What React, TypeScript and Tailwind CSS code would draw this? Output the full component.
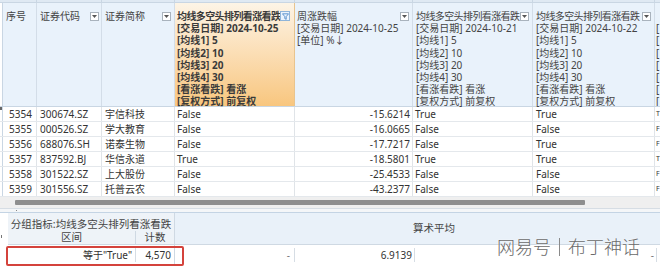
import React from "react";

const FONT = { fontFamily: '"Noto Sans", "Noto Sans CJK SC", sans-serif' };

function FilterBtn() {
  return (
    <span className="flex h-[9px] w-[9px] shrink-0 items-center justify-center border border-[#a9b3bd] bg-white">
      <svg width="5" height="3" viewBox="0 0 5 3"><path d="M0 0 L5 0 L2.5 3 Z" fill="#555" /></svg>
    </span>
  );
}

function FunnelBtn() {
  return (
    <span className="flex h-[10px] w-[10px] shrink-0 items-center justify-center border border-[#8fb4d9] bg-[#eaf3fd]">
      <svg width="7" height="7" viewBox="0 0 7 7"><path d="M0.5 0.8 H6.5 L4.2 3.6 V6.3 L2.8 5.6 V3.6 Z" fill="none" stroke="#3f7fc4" strokeWidth="0.8" /></svg>
    </span>
  );
}

const maLines = (date: string) => [
  `[交易日期] ${date}`,
  "[均线1] 5",
  "[均线2] 10",
  "[均线3] 20",
  "[均线4] 30",
  "[看涨看跌] 看涨",
  "[复权方式] 前复权",
];

const rows = [
  ["5354", "300674.SZ", "宇信科技", "False", "-15.6214", "True", "True", "T"],
  ["5355", "000526.SZ", "学大教育", "False", "-16.0665", "False", "False", "F"],
  ["5356", "688076.SH", "诺泰生物", "False", "-17.7217", "False", "True", "F"],
  ["5357", "837592.BJ", "华信永道", "True", "-18.5801", "True", "True", "T"],
  ["5358", "301522.SZ", "上大股份", "False", "-25.4533", "False", "False", "F"],
  ["5359", "301556.SZ", "托普云农", "False", "-43.2377", "False", "False", "F"],
];

export default function App() {
  return (
    <div className="relative h-[266px] w-[660px] overflow-hidden bg-white text-[10px] text-[#333]" style={FONT}>
      {/* top strip */}
      <div className="flex h-[3px] border-b border-[#c9d6e3] bg-[#dfe9f3]">
        <div className="w-[37px] border-r border-[#c9d6e3]" />
        <div className="w-[65px] border-r border-[#c9d6e3]" />
        <div className="w-[73px] border-r border-[#c9d6e3]" />
        <div className="w-[120px] border-r border-[#c9d6e3]" />
        <div className="w-[118px] border-r border-[#c9d6e3]" />
        <div className="w-[120px] border-r border-[#c9d6e3]" />
        <div className="w-[122px] border-r border-[#c9d6e3]" />
        <div className="flex-1" />
      </div>

      {/* header */}
      <div className="flex h-[104px] border-b border-[#c9d6e3] bg-[#e9f2fb] leading-[12.2px] text-[#444]">
        <div className="w-[3px] border-r border-[#c9d6e3] bg-white" />
        <div className="w-[34px] shrink-0 border-r border-[#d3dde8] pl-[3px] pt-[7px]">序号</div>
        <div className="w-[65px] shrink-0 border-r border-[#d3dde8] pl-[3px] pr-[2px] pt-[7px]">
          <div className="flex items-center justify-between">
            <span>证券代码</span>
            <FilterBtn />
          </div>
        </div>
        <div className="w-[73px] shrink-0 border-r border-[#d3dde8] pl-[3px] pr-[3px] pt-[7px]">
          <div className="flex items-center justify-between">
            <span>证券简称</span>
            <FilterBtn />
          </div>
        </div>
        <div className="w-[120px] shrink-0 border-r border-[#e8c48e] bg-gradient-to-b from-[#fdf4e6] to-[#f8c67e] pl-[2px] pr-[4px] pt-[7px] font-bold text-[#3a3a3a]">
          <div className="flex items-center justify-between">
            <span className="whitespace-nowrap tracking-[-0.6px]">均线多空头排列看涨看跌</span>
            <FunnelBtn />
          </div>
          {maLines("2024-10-25").map((l) => (
            <div key={l} className="whitespace-nowrap">{l}</div>
          ))}
        </div>
        <div className="w-[118px] shrink-0 border-r border-[#d3dde8] pl-[2px] pr-[3px] pt-[7px]">
          <div className="flex items-center justify-between">
            <span>周涨跌幅</span>
            <FilterBtn />
          </div>
          <div className="whitespace-nowrap">[交易日期] 2024-10-25</div>
          <div className="whitespace-nowrap">[单位] %↓</div>
        </div>
        <div className="w-[120px] shrink-0 border-r border-[#d3dde8] pl-[3px] pr-[3px] pt-[7px]">
          <div className="flex items-center justify-between">
            <span className="whitespace-nowrap tracking-[-0.6px]">均线多空头排列看涨看跌</span>
            <FilterBtn />
          </div>
          {maLines("2024-10-21").map((l) => (
            <div key={l} className="whitespace-nowrap">{l}</div>
          ))}
        </div>
        <div className="w-[122px] shrink-0 border-r border-[#d3dde8] pl-[3px] pr-[3px] pt-[7px]">
          <div className="flex items-center justify-between">
            <span className="whitespace-nowrap tracking-[-0.6px]">均线多空头排列看涨看跌</span>
            <FilterBtn />
          </div>
          {maLines("2024-10-22").map((l) => (
            <div key={l} className="whitespace-nowrap">{l}</div>
          ))}
        </div>
        <div className="min-w-0 flex-1 overflow-hidden pl-[1px] pt-[7px]">
          {["", "[", "[", "[", "[", "[", "[", "["].map((l, i) => (
            <div key={i} className="h-[12.2px]">{l}</div>
          ))}
        </div>
      </div>

      {/* data rows */}
      {rows.map((r, i) => (
        <div key={r[0]} className="flex h-[15px] border-b border-[#e4e8ec] leading-[14px]">
          <div className="relative w-[3px] border-r border-[#c9d6e3] bg-white">
            {i === 0 && <span className="absolute left-0 top-0 h-[3px] w-[2px] bg-[#666]" />}
          </div>
          <div className="w-[34px] shrink-0 border-r border-[#e0e4e8] pr-[4px] text-right">{r[0]}</div>
          <div className="w-[65px] shrink-0 border-r border-[#e0e4e8] pl-[3px]">{r[1]}</div>
          <div className="w-[73px] shrink-0 border-r border-[#e0e4e8] pl-[3px]">{r[2]}</div>
          <div className="w-[120px] shrink-0 border-r border-[#e0e4e8] pl-[2px]">{r[3]}</div>
          <div className="w-[118px] shrink-0 border-r border-[#e0e4e8] pr-[2px] text-right">{r[4]}</div>
          <div className="w-[120px] shrink-0 border-r border-[#e0e4e8] pl-[2px]">{r[5]}</div>
          <div className="w-[122px] shrink-0 border-r border-[#e0e4e8] pl-[3px]">{r[6]}</div>
          <div className="min-w-0 flex-1 overflow-hidden pl-[1px] text-[7px]">{r[7]}</div>
        </div>
      ))}

      {/* horizontal scrollbar */}
      <div className="flex h-[12px] items-center border-b border-[#d6dde4] bg-[#efefef] pl-[15px]">
        <div className="h-[5px] w-[570px] rounded-[1px] bg-[#8e8e8e]" />
      </div>
      {/* splitter */}
      <div className="relative h-[4px] border-b border-[#c4d4e4] bg-[#f4f6f8]">
        <span className="absolute left-[16px] top-[1px] h-[1px] w-[1px] bg-[#888]" />
      </div>

      {/* bottom panel */}
      <div className="flex h-[51px]">
        <div className="relative w-[8px] shrink-0 bg-white">
          <span className="absolute left-[1px] top-[22px] h-[3px] w-[1px] bg-[#777]" />
        </div>
        <div className="flex w-[167px] shrink-0 flex-col border-r border-[#cfd9e3]">
          <div className="flex h-[18px] items-end justify-center bg-[#eef3f8] text-[10.5px] leading-[13px] text-[#444]">
            分组指标:均线多空头排列看涨看跌
          </div>
          <div className="flex h-[14px] items-end border-b border-[#cfd9e3] bg-[#eef3f8] text-[10.5px] leading-[13px] text-[#444]">
            <div className="w-[128px] border-r border-[#cfd9e3] text-center">区间</div>
            <div className="flex-1 text-center">计数</div>
          </div>
          <div className="flex h-[19px] items-center bg-white leading-[14px]">
            <div className="w-[128px] border-r border-[#d6dde4] pr-[3px] text-right">等于"True"</div>
            <div className="flex-1 pr-[3px] text-right">4,570</div>
          </div>
        </div>
        <div className="flex min-w-0 flex-1 flex-col">
          <div className="flex h-[32px] items-center border-b border-[#cfd9e3] bg-[#e9f1f9] pl-[238px] text-[10.5px] text-[#444]">
            算术平均
          </div>
          <div className="flex h-[19px] items-center bg-white leading-[14px]">
            <div className="w-[120px] shrink-0 border-r border-[#d6dde4] pr-[4px] text-right text-[#777]">-</div>
            <div className="w-[120px] shrink-0 border-r border-[#d6dde4] pr-[2px] text-right">6.9139</div>
            <div className="w-[120px] shrink-0 border-r border-[#d6dde4]"> </div>
            <div className="w-[122px] shrink-0 border-r border-[#d6dde4] pr-[2px] text-right text-[#777]">-</div>
            <div className="flex-1" />
          </div>
        </div>
      </div>

      {/* red highlight annotation */}
      <div className="absolute left-[6px] top-[246px] h-[20px] w-[178px] rounded-[2px] border-2 border-[#d4433c]" />

      {/* watermark */}
      <div className="absolute left-[497px] top-[236px] flex items-center whitespace-nowrap text-[18px] font-light leading-[22px] text-[#6a6a6a] [text-shadow:0_0_2px_#fff]">
        <span>网易号</span>
        <span className="mx-[8px] h-[18px] w-[1px] bg-[#8a8a8a]" />
        <span>布丁神话</span>
      </div>
    </div>
  );
}
